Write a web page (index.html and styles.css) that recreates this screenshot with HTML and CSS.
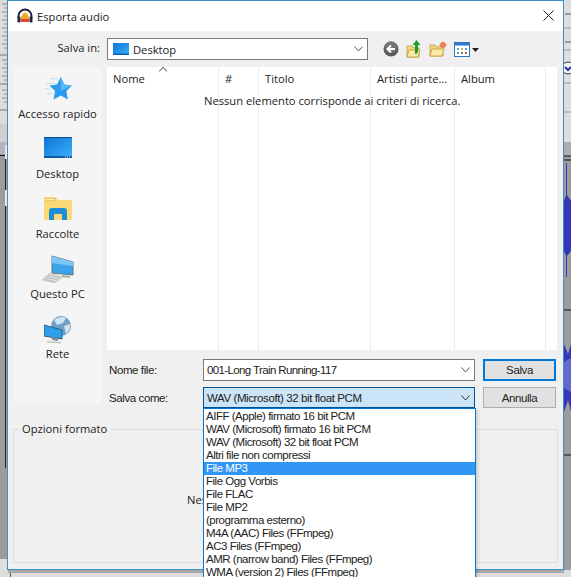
FILE: index.html
```html
<!DOCTYPE html>
<html lang="it">
<head>
<meta charset="utf-8">
<title>Esporta audio</title>
<link rel="stylesheet" href="styles.css">
</head>
<body>
<svg class="backdrop" width="571" height="577" viewBox="0 0 571 577">
  <rect width="571" height="577" fill="#9c9c9c"/>
  <rect width="8" height="124" fill="#dcdcdc"/>
  <path d="M2 4h6M4 8h4M2 12h6M4 16h4M2 20h6M4 24h4M2 28h6M4 32h4M2 36h6M4 40h4M2 44h6M4 48h4M2 60h6M4 64h4M2 68h6M4 72h4M2 76h6M4 80h4M2 90h6M4 94h4M2 98h6M4 102h4" stroke="#8f8f8f"/>
  <path d="M0 55h8M0 84h8M0 110h8" stroke="#777"/>
  <rect y="124" width="8" height="18" fill="#cfcfcf"/>
  <rect y="142" width="8" height="12" fill="#b4b4c0"/>
  <rect y="155" width="8" height="1" fill="#111"/>
  <rect x="5" y="156" width="1" height="312" fill="#222"/>
  <rect x="5" y="145" width="3" height="14" fill="#e8e8e8"/>
  <rect x="5" y="190" width="3" height="16" fill="#e8e8e8"/>
  <rect y="559" width="8" height="18" fill="#dedede"/>
  <rect y="570" width="571" height="7" fill="#dcdcdc"/>
  <rect x="8" y="570" width="556" height="3" fill="#a8a8a8"/>
  <rect x="10" y="573" width="1" height="4" fill="#555"/>
  <rect x="564" width="7" height="142" fill="#dedede"/>
  <path d="M564 28h7M564 50h7M564 83h7M564 112h7" stroke="#999"/>
  <path d="M565 14h6M565 42h6" stroke="#555"/>
  <circle cx="568" cy="68" r="6" fill="#f4f4f4" stroke="#333"/>
  <path d="M565 67l3 3 3-3" stroke="#33339a" stroke-width="2" fill="none"/>
  <rect x="564" y="142" width="7" height="14" fill="#adadad"/>
  <path d="M564 156h7M564 160h7M564 310h7M564 455h7" stroke="#111"/>
  <path d="M566 163h1v32l4 6v50l-4 5v21h-1v-21l-2-5v-50l2-6z" fill="#3636b8"/>
  <path d="M564 344l4 10 3-10v68l-3-12-4 12z" fill="#3636b8"/>
  <path d="M564 362l7-4v34l-7-4z" fill="#6868cc"/>
</svg>

<main class="dialog">
  <header class="titlebar">
    <svg class="app-icon" width="16" height="16" viewBox="0 0 16 16">
      <path d="M1.500 10V8a6.500 6.500 0 0 1 13 0v2" fill="none" stroke="#20233f" stroke-width="2"/>
      <rect x="0.500" y="8.500" width="3" height="6" rx="1.200" fill="#20233f"/>
      <rect x="12.500" y="8.500" width="3" height="6" rx="1.200" fill="#20233f"/>
      <path d="M4 9l1-1 1-3 1 1 1-3 1 3 1-1 1 3 1 1v5H4z" fill="#f5a623"/>
      <path d="M4 11h8v3H4z" fill="#e8442a"/>
    </svg>
    <span class="title">Esporta audio</span>
    <svg class="close" width="11" height="11" viewBox="0 0 11 11">
      <path d="M0.500 0.500l10 10M10.500 0.500l-10 10" stroke="#222" fill="none"/>
    </svg>
  </header>

  <div class="toolbar">
    <label class="toolbar-label">Salva in:</label>
    <div class="combo location">
      <svg class="desk-small" width="16" height="12" viewBox="0 0 16 12">
        <defs><linearGradient id="deskSmall" x1="0" y1="0" x2="1" y2="1"><stop offset="0" stop-color="#0b74d8"/><stop offset="1" stop-color="#3cb0f8"/></linearGradient></defs>
        <rect width="16" height="12" fill="url(#deskSmall)"/>
        <rect y="10.500" width="16" height="1.500" fill="#0a5fb0"/>
      </svg>
      <span class="location-text">Desktop</span>
      <svg class="chevron" width="9" height="6" viewBox="0 0 9 6"><path d="M0.500 0.500L4.500 5l4-4.500" fill="none" stroke="#555"/></svg>
    </div>
    <div class="tools">
      <svg width="16" height="16" viewBox="0 0 16 16">
        <circle cx="8" cy="8" r="7.500" fill="#5a5a5a"/>
        <circle cx="8" cy="6" r="6" fill="#8a8a8a" opacity=".55"/>
        <path d="M12 8H5M8 4.500L4.500 8 8 11.500" fill="none" stroke="#fff" stroke-width="2"/>
      </svg>
      <svg width="16" height="18" viewBox="0 0 16 18">
        <path d="M1 6h5l2 2h5v9H1z" fill="#f2d77e" stroke="#c9a94e"/>
        <path d="M1 17l2-7h11l-2 7z" fill="#fbe9a6" stroke="#c9a94e"/>
        <path d="M9 14V5H6.500L10.500 0l4 5H12v6q0 3-3 3z" fill="#1f9a35"/>
      </svg>
      <svg width="18" height="16" viewBox="0 0 18 16">
        <path d="M1 4h5l2 2h6v9H1z" fill="#f2d77e" stroke="#c9a94e"/>
        <path d="M1 15l2-7h12l-2 7z" fill="#fbe9a6" stroke="#c9a94e"/>
        <circle cx="14" cy="4" r="2.800" fill="#e8602c"/>
        <path d="M14 0v8M10 4h8" stroke="#f39a6b"/>
      </svg>
      <svg width="25" height="15" viewBox="0 0 25 15">
        <rect x="0.500" y="0.500" width="15" height="14" fill="#fff" stroke="#2e79c7"/>
        <rect x="0.500" y="0.500" width="15" height="3" fill="#2e79c7"/>
        <path d="M3 6h2v2H3z" fill="#4aa3df"/><path d="M7 6h2v2H7z" fill="#e0a030"/><path d="M11 6h2v2h-2z" fill="#4aa3df"/>
        <path d="M3 10h2v2H3z" fill="#57a85a"/><path d="M7 10h2v2H7z" fill="#777"/><path d="M11 10h2v2h-2z" fill="#d8594c"/>
        <path d="M18 6h7l-3.500 4z" fill="#222"/>
      </svg>
    </div>
  </div>

  <div class="main">
    <nav class="sidebar">
      <div class="place">
        <svg class="icon-star" width="30" height="26" viewBox="0 0 30 28">
          <path d="M18 1l3.800 8.200 8.200 1-6 6 1.600 9L18 21l-7.800 4.200 1.600-9-6-6 8.200-1z" fill="#2b9bef"/>
          <path d="M18 1l3.800 8.200 8.200 1-12 6z" fill="#57b7f7"/>
          <path d="M6 3h9M2 8h10M1 14h6M3 19h6" stroke="#b9d9f2"/>
        </svg>
        <span>Accesso rapido</span>
      </div>
      <div class="place">
        <svg class="icon-desktop" width="28" height="21" viewBox="0 0 28 21">
          <defs><linearGradient id="deskLarge" x1="0" y1="0" x2="1" y2="1"><stop offset="0" stop-color="#0b74d8"/><stop offset="1" stop-color="#3cb0f8"/></linearGradient></defs>
          <rect width="28" height="21" fill="url(#deskLarge)"/>
          <rect width="28" height="1" fill="#0b4f92"/>
          <rect y="19" width="28" height="2" fill="#0b5aa8"/>
          <path d="M21 20h1M23 20h1M25 20h1" stroke="#e6f4ff"/>
        </svg>
        <span>Desktop</span>
      </div>
      <div class="place">
        <svg class="icon-folder" width="28" height="24" viewBox="0 0 28 24">
          <path d="M0 1h11l3 3h14v20H0z" fill="#fbd976"/>
          <rect x="2" y="2.500" width="9" height="2" fill="#fff3c4" stroke="#c9a94e" stroke-width=".5"/>
          <path d="M5 24V15q0-3 3-3h12q3 0 3 3v9h-5v-6h-8v6z" fill="#1b8fd8"/>
        </svg>
        <span>Raccolte</span>
      </div>
      <div class="place">
        <svg class="icon-pc" width="32" height="28" viewBox="0 0 32 28">
          <path d="M10 1l21 6v13l-21-2z" fill="#3aa4ea" stroke="#66747f"/>
          <path d="M10 1l21 6v4L10 8z" fill="#7cc6f5"/>
          <path d="M20 20l8 1v2l-8-1z" fill="#aaa"/>
          <path d="M8 18l13 4-8 6-13-3z" fill="#dcdcdc" stroke="#b0b0b0" stroke-width=".5"/>
          <path d="M6 20l12 3M4 22l12 3M2 24l11 3" stroke="#a8a8a8" stroke-width=".6"/>
        </svg>
        <span>Questo PC</span>
      </div>
      <div class="place">
        <svg class="icon-net" width="28" height="28" viewBox="0 0 28 28">
          <circle cx="17" cy="10" r="10" fill="#6e9fc4"/>
          <path d="M10 4q6-5 12-2l-3 5-6 2zM20 10l6-2q1 6-4 10z" fill="#cfe3f1"/>
          <path d="M0 9l18 5v9L0 20z" fill="#2ea0ea" stroke="#245f8c"/>
          <path d="M8 21l6 1v3l-6-1z" fill="#888"/>
          <path d="M3 25l14 1v1.500L3 26.500z" fill="#c0c0c0"/>
        </svg>
        <span>Rete</span>
      </div>
    </nav>

    <div class="content">
      <section class="filelist">
        <div class="sort-mark"></div>
        <div class="columns">
          <div class="col col-name">Nome</div>
          <div class="col col-num">#</div>
          <div class="col col-title">Titolo</div>
          <div class="col col-artist">Artisti parte...</div>
          <div class="col col-album">Album</div>
          <div class="col col-rest"></div>
        </div>
        <p class="empty">Nessun elemento corrisponde ai criteri di ricerca.</p>
      </section>

      <form class="file-form">
        <label class="form-label">Nome file:</label>
        <div class="combo name-combo">
          <span class="combo-text">001-Long Train Running-117</span>
          <svg class="chevron" width="9" height="6" viewBox="0 0 9 6"><path d="M0.500 0.500L4.500 5l4-4.500" fill="none" stroke="#555"/></svg>
        </div>
        <button class="btn btn-primary" type="button">Salva</button>
        <label class="form-label">Salva come:</label>
        <div class="combo type-combo">
          <span class="combo-text">WAV (Microsoft) 32 bit float PCM</span>
          <svg class="chevron" width="9" height="6" viewBox="0 0 9 6"><path d="M0.500 0.500L4.500 5l4-4.500" fill="none" stroke="#333"/></svg>
        </div>
        <button class="btn" type="button">Annulla</button>
      </form>
    </div>
  </div>

  <fieldset class="options">
    <legend>Opzioni formato</legend>
    <p class="no-options">Nessuna opzione per il formato</p>
  </fieldset>

  <ul class="dropdown">
    <li>AIFF (Apple) firmato 16 bit PCM</li>
    <li>WAV (Microsoft) firmato 16 bit PCM</li>
    <li>WAV (Microsoft) 32 bit float PCM</li>
    <li>Altri file non compressi</li>
    <li class="selected">File MP3</li>
    <li>File Ogg Vorbis</li>
    <li>File FLAC</li>
    <li>File MP2</li>
    <li>(programma esterno)</li>
    <li>M4A (AAC) Files (FFmpeg)</li>
    <li>AC3 Files (FFmpeg)</li>
    <li>AMR (narrow band) Files (FFmpeg)</li>
    <li>WMA (version 2) Files (FFmpeg)</li>
  </ul>
</main>
</body>
</html>
```

FILE: styles.css
```css
* { box-sizing: border-box; }
html, body { margin: 0; padding: 0; height: 577px; overflow: hidden; }
body { position: relative; width: 571px; background: #9c9c9c; font-family: "Liberation Sans", Arial, sans-serif; font-size: 12px; color: #111; }
svg { display: block; flex: none; }

.backdrop { position: absolute; left: 0; top: 0; }

.dialog {
  position: absolute; left: 7px; top: 0; width: 557px; height: 570px;
  background: #f0f0f0; border: 1px solid #3a90c8;
  display: flex; flex-direction: column;
  font-family: "Open Sans", "Noto Sans", sans-serif;
  font-size: 11.2px;
}

.titlebar { height: 30px; flex: none; background: #fff; display: flex; align-items: center; padding: 0 9px 0 9px; }
.app-icon { margin-right: 4px; }
.title { flex: 1; color: #222; }
.close { margin-bottom: 1px; }

.toolbar { height: 36px; flex: none; display: flex; align-items: flex-start; }
.toolbar-label { width: 92px; text-align: right; padding-top: 9px; line-height: 16px; color: #222; }
.combo { display: flex; align-items: center; background: #fff; border: 1px solid #7a7a7a; }
.chevron { margin-left: auto; }
.location { width: 261px; height: 22px; margin: 7px 0 0 7px; padding: 0 4px 0 5px; }
.location-text { margin-left: 4px; color: #222; }
.tools { display: flex; align-items: center; margin: 7px 0 0 15px; gap: 7px; height: 22px; }

.main { display: flex; flex: none; }
.sidebar { width: 87px; height: 337px; margin-left: 6px; background: #f5f5f5; display: flex; flex-direction: column; align-items: center; }
.place { height: 60px; flex: none; width: 100%; display: flex; flex-direction: column; align-items: center; justify-content: flex-end; padding-bottom: 5px; }
.place span { line-height: 16px; color: #222; white-space: nowrap; }
.icon-star { margin-bottom: 4px; }
.icon-desktop { margin-bottom: 8px; }
.icon-folder { margin-bottom: 6px; }
.icon-pc { margin-bottom: 3px; }
.icon-net { margin-bottom: 2px; }

.content { margin-left: 6px; width: 450px; }
.filelist { position: relative; height: 283px; background: #fff; }
.sort-mark { position: absolute; left: 53px; top: 1px; width: 6px; height: 6px; border-left: 1px solid #777; border-top: 1px solid #777; transform: rotate(45deg); }
.columns { display: flex; height: 283px; }
.col { border-right: 1px solid #ececec; padding: 3px 0 0 6px; line-height: 17px; color: #222; }
.col-name { width: 112px; }
.col-num { width: 40px; }
.col-title { width: 112px; }
.col-artist { width: 84px; white-space: nowrap; }
.col-album { width: 91px; }
.col-rest { width: 11px; padding: 0; border-right: 0; }
.empty { position: absolute; left: 97px; top: 26px; margin: 0; line-height: 16px; white-space: nowrap; color: #222; }

.file-form { display: grid; grid-template-columns: 96px 272px 81px; grid-template-rows: 22px 21px; row-gap: 6px; margin-top: 9px; font-family: "Liberation Sans", Arial, sans-serif; font-size: 11.5px; letter-spacing: -0.4px; }
.form-label { padding-left: 2px; display: flex; align-items: center; color: #222; }
.name-combo, .type-combo { padding: 0 4px 0 3px; }
.name-combo { letter-spacing: -0.62px; }
.type-combo { background: #cce4f7; border-color: #005499; }
.combo-text { color: #222; }
.btn { margin-left: 8px; width: 73px; height: 21px; background: #e1e1e1; border: 1px solid #adadad; font: inherit; letter-spacing: inherit; color: #222; padding: 0; }
.btn-primary { border: 2px solid #0078d7; height: 22px; }

.options { margin: 13px 0 0 5px; padding: 0; width: 545px; height: 142px; border: 1px solid #dcdcdc; flex: none; min-inline-size: 0; }
.options legend { margin-left: 5px; padding: 0 3px; line-height: 16px; color: #222; }
.no-options { margin: 55px 0 0; padding-left: 173px; line-height: 16px; color: #222; }

.dropdown {
  position: absolute; left: 195px; top: 407px; width: 273px; height: 170px; margin: 0; padding: 1px 0 0; list-style: none;
  background: #fff; border: 1px solid #0078d7; border-bottom: 0; overflow: hidden;
  font-family: "Liberation Sans", Arial, sans-serif; font-size: 11.5px; letter-spacing: -0.48px; box-shadow: 2px 2px 3px rgba(0,0,0,.15);
}
.dropdown li { height: 13px; line-height: 13px; padding-left: 2px; color: #222; white-space: nowrap; }
.dropdown .selected { background: #3296f5; color: #fff; }
```
